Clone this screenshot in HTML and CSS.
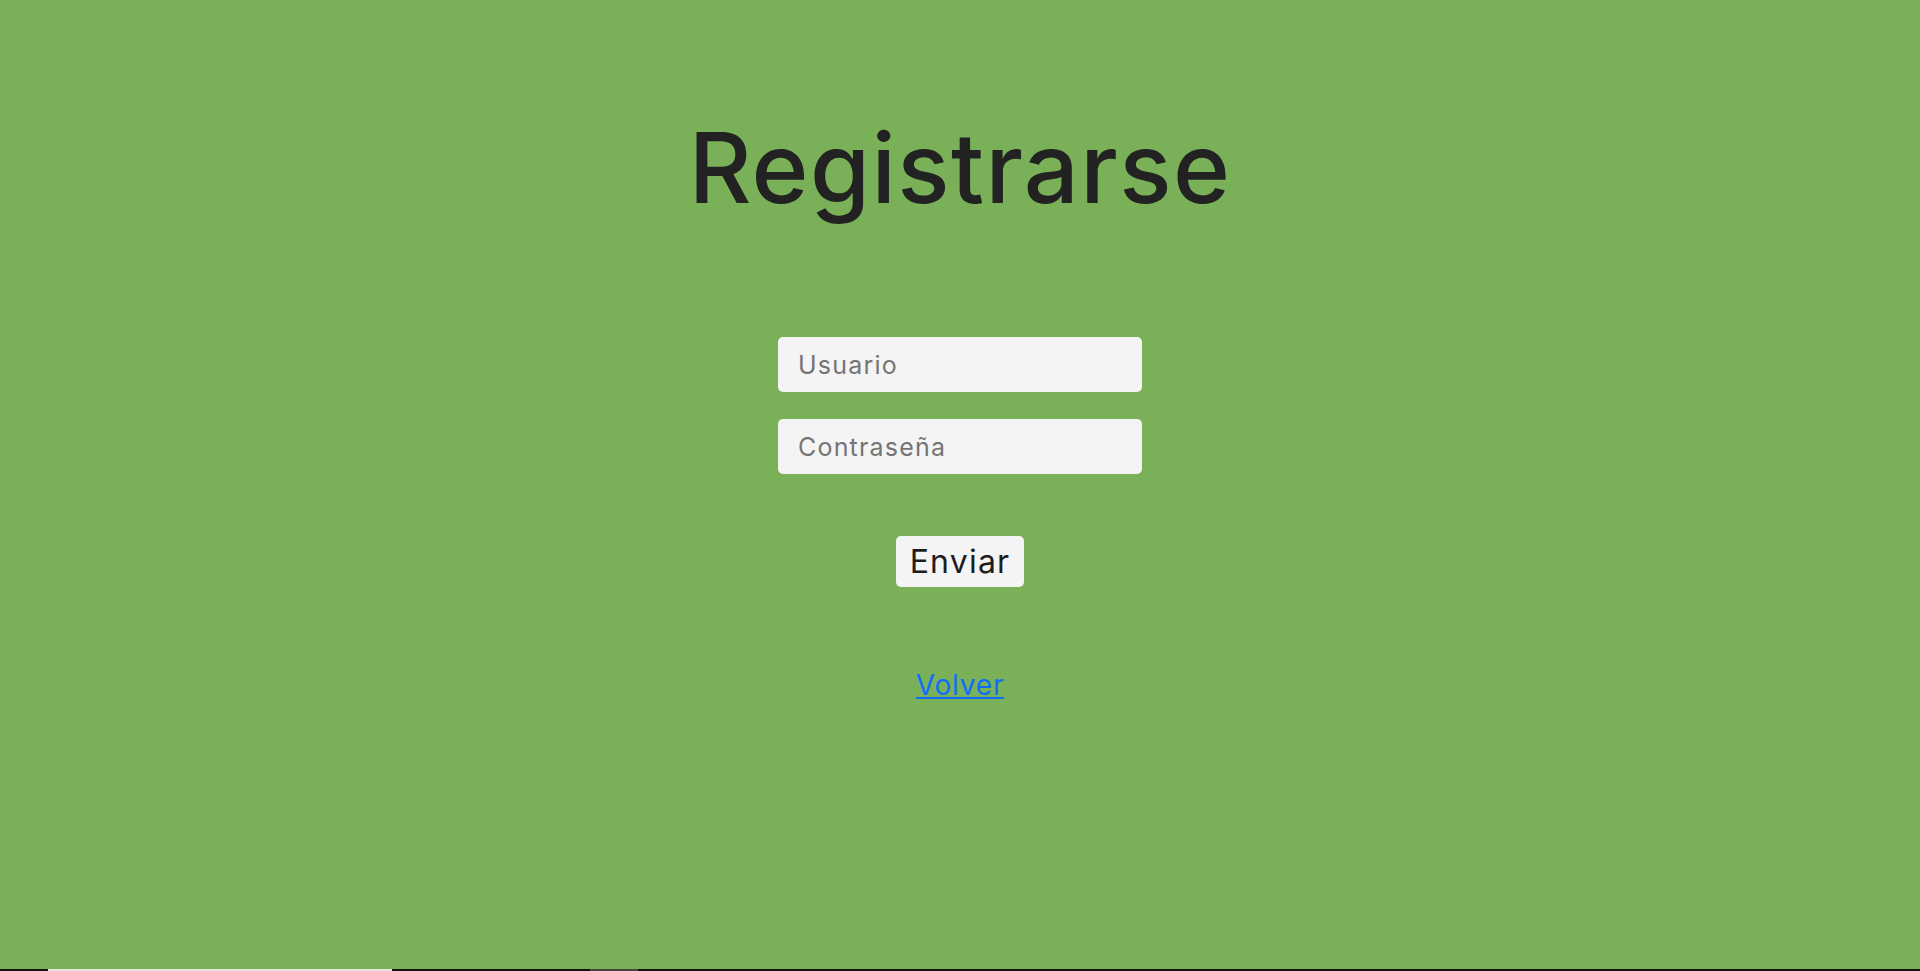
FILE: index.html
```html
<!DOCTYPE html>
<html lang="es">
<head>
<meta charset="utf-8">
<title>Registrarse</title>
<link rel="stylesheet" href="styles.css">
</head>
<body>
<main class="page">
  <h1 class="title">Registrarse</h1>
  <form class="form">
    <input class="field" type="text" placeholder="Usuario">
    <input class="field" type="password" placeholder="Contraseña">
    <button class="submit" type="button">Enviar</button>
  </form>
  <a class="back" href="#">Volver</a>
</main>
<div class="taskbar">
  <span class="seg seg-white"></span>
  <span class="seg seg-gray"></span>
</div>
</body>
</html>
```

FILE: styles.css
```css
html, body {
  margin: 0;
  padding: 0;
}
body {
  height: 100vh;
  display: flex;
  flex-direction: column;
  background: #7ab158;
  font-family: "Inter", "Liberation Sans", sans-serif;
  color: #212121;
  overflow: hidden;
}
.page {
  flex: 1;
  display: flex;
  flex-direction: column;
  align-items: center;
}
.title {
  margin: 120px 0 0;
  font-size: 97px;
  line-height: 96px;
  font-weight: 500;
  letter-spacing: 1.4px;
  color: #222222;
}
.form {
  margin-top: 121px;
  display: flex;
  flex-direction: column;
  align-items: center;
  gap: 27px;
}
.field {
  box-sizing: border-box;
  width: 364px;
  height: 55px;
  padding: 0 20px;
  border: none;
  border-radius: 5px;
  background: #f4f4f4;
  font-family: inherit;
  font-size: 25px;
  letter-spacing: 1.2px;
  color: #333;
  outline: none;
}
.field::placeholder {
  color: #757575;
}
.submit {
  margin-top: 35px;
  box-sizing: border-box;
  height: 51px;
  padding: 0 14px;
  border: none;
  border-radius: 5px;
  background: #f4f4f4;
  font-family: inherit;
  font-size: 32px;
  letter-spacing: 1.2px;
  color: #1d1d1d;
}
.back {
  display: block;
  margin-top: 84px;
  font-size: 28px;
  line-height: 28px;
  letter-spacing: 0.8px;
  color: #0d6efd;
  text-decoration: underline;
}
.taskbar {
  height: 2px;
  display: flex;
  background: #121212;
  padding-left: 48px;
}
.seg {
  display: block;
  height: 2px;
}
.seg-white {
  width: 344px;
  background: #e6e6e6;
}
.seg-gray {
  width: 48px;
  margin-left: 198px;
  background: #444444;
}
```
